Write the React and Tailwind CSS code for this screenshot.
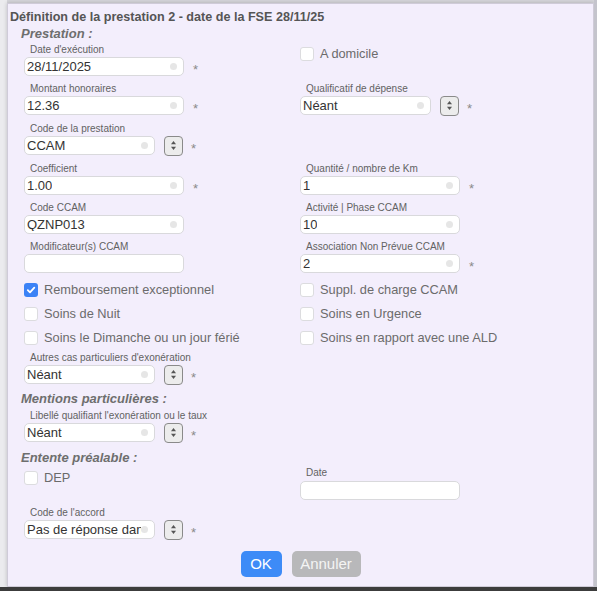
import React from "react";

const Circle = () => (
  <span className="ml-auto mr-[6px] h-[7px] w-[7px] shrink-0 rounded-full bg-[#e6e6e6]" />
);

const Input = ({ value = "", w = 160 }) => (
  <div
    className={`flex h-[19px] items-center overflow-hidden rounded-[5px] border border-[#d9d9dc] bg-white pl-[2px] text-[13px] leading-none text-[#333] ${
      w === 160 ? "w-[160px]" : "w-[131px]"
    }`}
  >
    <span className="min-w-0 overflow-hidden whitespace-nowrap">{value}</span>
    {value !== "" && <Circle />}
  </div>
);

const Star = ({ ml = "ml-[9px]" }) => (
  <span className={`${ml} translate-y-[3px] text-[13px] leading-none text-[#8a8a8a]`}>*</span>
);

const Stepper = () => (
  <div className="ml-[9px] flex h-[20px] w-[19px] shrink-0 items-center justify-center rounded-[4px] border-[1.5px] border-[#8a8a8a] bg-[#ececec]">
    <svg width="7" height="11" viewBox="0 0 7 11">
      <path d="M3.5 1 L6 4.2 L1 4.2 Z" fill="#555" />
      <path d="M3.5 10 L6 6.8 L1 6.8 Z" fill="#555" />
    </svg>
  </div>
);

const Label = ({ children }) => (
  <div className="h-[13px] pl-[6px] text-[10px] leading-[11px] text-[#626262] whitespace-nowrap">
    {children}
  </div>
);

const Field = ({ label, value, star, select }) => (
  <div className="h-[32px]">
    <Label>{label}</Label>
    <div className="flex h-[19px] items-center">
      <Input value={value} w={select ? 131 : 160} />
      {select && <Stepper />}
      {star && <Star ml={select ? "ml-[8px]" : "ml-[9px]"} />}
    </div>
  </div>
);

const Check = ({ label, checked }) => (
  <div className="flex h-[24px] items-center">
    {checked ? (
      <span className="flex h-[14px] w-[14px] items-center justify-center rounded-[3px] bg-[#3b82f6]">
        <svg width="10" height="10" viewBox="0 0 10 10">
          <path d="M1.8 5.2 L4 7.4 L8.3 2.6" fill="none" stroke="white" strokeWidth="1.8" strokeLinecap="round" strokeLinejoin="round" />
        </svg>
      </span>
    ) : (
      <span className="h-[14px] w-[14px] rounded-[3px] border border-[#dcdcdf] bg-white" />
    )}
    <span className="ml-[6px] text-[12.8px] leading-none text-[#6b6b6b] whitespace-nowrap">{label}</span>
  </div>
);

const Heading = ({ children, className = "" }) => (
  <div className={`h-[16px] pl-[13px] text-[13px] font-bold italic leading-[16px] text-[#6e6e6e] ${className}`}>
    {children}
  </div>
);

export default function App() {
  return (
    <div className="flex h-[591px] w-[597px] flex-col overflow-hidden bg-[#d5d5da] font-['Liberation_Sans',Arial,sans-serif]">
      <div className="flex flex-1">
        <div className="w-[7px] bg-[#ebebee]" />
        <div className="mt-[3px] h-[584px] w-[587px] border border-[#cfcbd8] bg-[#f3eefc] shadow-[0_0_4px_rgba(0,0,0,0.2)]">
          <div className="pl-[2px] pt-[5px] text-[12.6px] font-bold leading-[16px] text-[#555] whitespace-nowrap">
            Définition de la prestation 2 - date de la FSE 28/11/25
          </div>
          <Heading className="mt-[1px]">Prestation :</Heading>

          <div className="pl-[16px]">
            <div className="mt-[2px] grid grid-cols-[276px_1fr]">
              <Field label="Date d'exécution" value="28/11/2025" star />
              <div className="-mt-[2px]">
                <Check label="A domicile" />
              </div>
            </div>

            <div className="mt-[7px] grid grid-cols-[276px_1fr]">
              <Field label="Montant honoraires" value="12.36" star />
              <Field label="Qualificatif de dépense" value="Néant" select star />
            </div>

            <div className="mt-[8px] grid grid-cols-[276px_1fr]">
              <Field label="Code de la prestation" value="CCAM" select star />
              <div />
            </div>

            <div className="mt-[8px] grid grid-cols-[276px_1fr]">
              <Field label="Coefficient" value="1.00" star />
              <Field label="Quantité / nombre de Km" value="1" star />
            </div>

            <div className="mt-[7px] grid grid-cols-[276px_1fr]">
              <Field label="Code CCAM" value="QZNP013" />
              <Field label="Activité | Phase CCAM" value="10" />
            </div>

            <div className="mt-[7px] grid grid-cols-[276px_1fr]">
              <Field label="Modificateur(s) CCAM" value="" />
              <Field label="Association Non Prévue CCAM" value="2" star />
            </div>

            <div className="mt-[5px] grid grid-cols-[276px_1fr]">
              <div>
                <Check label="Remboursement exceptionnel" checked />
                <Check label="Soins de Nuit" />
                <Check label="Soins le Dimanche ou un jour férié" />
              </div>
              <div>
                <Check label="Suppl. de charge CCAM" />
                <Check label="Soins en Urgence" />
                <Check label="Soins en rapport avec une ALD" />
              </div>
            </div>

            <div className="mt-[2px]">
              <Field label="Autres cas particuliers d'exonération" value="Néant" select star />
            </div>
          </div>

          <Heading className="mt-[7px]">Mentions particulières :</Heading>
          <div className="mt-[3px] pl-[16px]">
            <Field label="Libellé qualifiant l'exonération ou le taux" value="Néant" select star />
          </div>

          <Heading className="mt-[8px]">Entente préalable :</Heading>
          <div className="pl-[16px]">
            <div className="grid grid-cols-[276px_1fr]">
              <div>
                <Check label="DEP" />
              </div>
              <div className="mt-[1px]">
                <Label>Date</Label>
                <div className="mt-[1px] h-[19px] w-[160px] rounded-[5px] border border-[#d9d9dc] bg-white" />
              </div>
            </div>
            <div className="mt-[7px]">
              <Field label="Code de l'accord" value="Pas de réponse dans" select star />
            </div>
          </div>

          <div className="mt-[12px] flex justify-center gap-[10px]">
            <button className="h-[26px] w-[41px] rounded-[5px] bg-[#3d8bf7] text-[15px] text-white">OK</button>
            <button className="h-[26px] w-[69px] rounded-[5px] bg-[#b8b8ba] text-[15px] text-[#f4f4f4]">Annuler</button>
          </div>
        </div>
        <div className="flex-1 bg-[#c4c4cc]" />
      </div>
      <div className="h-[4px] bg-[#3c3c3c]" />
    </div>
  );
}
